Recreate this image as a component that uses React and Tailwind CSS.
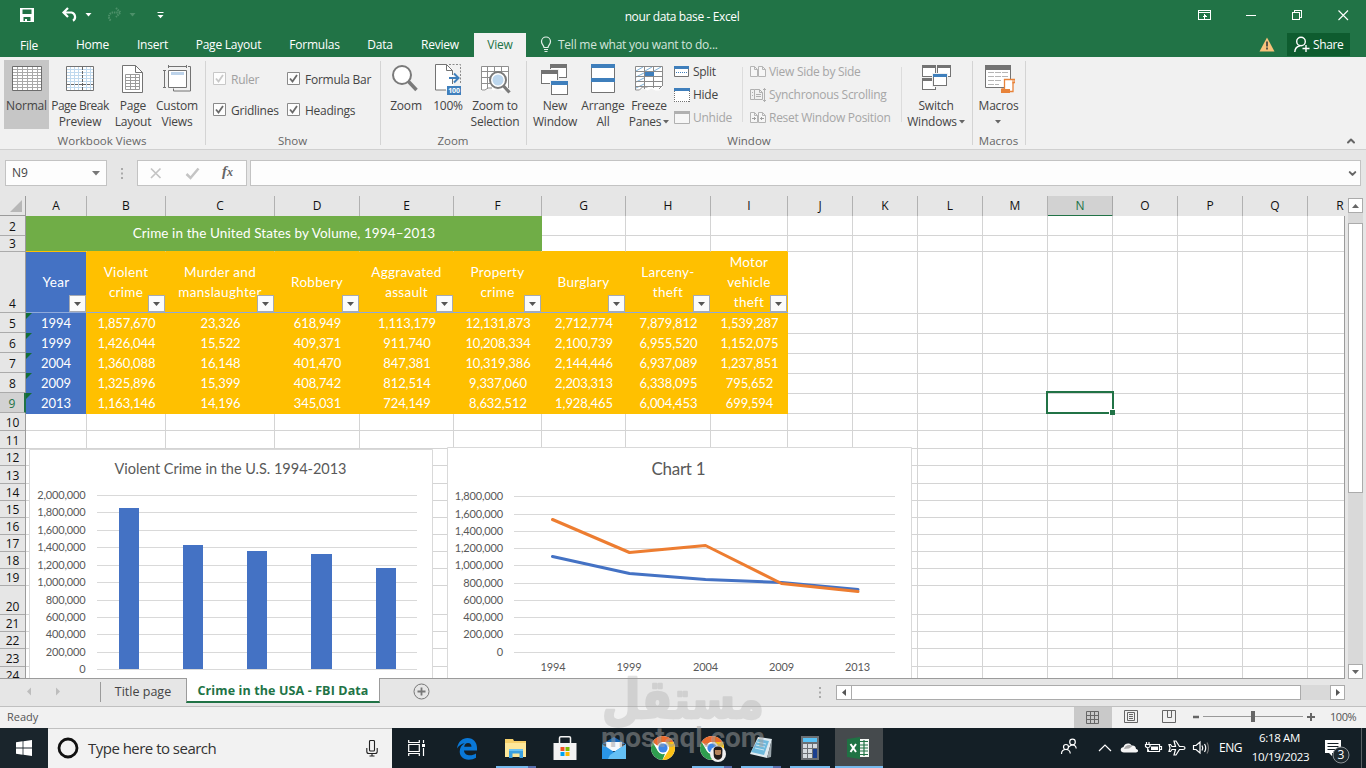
import { ChevronDown, ChevronUp } from 'lucide-react'

const TABS = [
  { label: 'File', cls: 'w-[58px] mr-1 pt-px' },
  { label: 'Home', cls: 'w-[61px]' },
  { label: 'Insert', cls: 'w-[59px]' },
  { label: 'Page Layout', cls: 'w-[93px]' },
  { label: 'Formulas', cls: 'w-[79px]' },
  { label: 'Data', cls: 'w-[52px]' },
  { label: 'Review', cls: 'w-[68px]' },
]

const COLUMNS = ['A', 'B', 'C', 'D', 'E', 'F', 'G', 'H', 'I', 'J', 'K', 'L', 'M', 'N', 'O', 'P', 'Q', 'R']

const GRID_COLS =
  'grid-cols-[61px_79px_109px_85px_94px_88px_84px_85px_77px_65px_65px_65px_65px_65px_65px_65px_65px_65px]'

const ROWS = [
  { n: 2, h: 20 },
  { n: 3, h: 16 },
  { n: 4, h: 61 },
  { n: 5, h: 20 },
  { n: 6, h: 20 },
  { n: 7, h: 20 },
  { n: 8, h: 20 },
  { n: 9, h: 20 },
  { n: 10, h: 18 },
  { n: 11, h: 18 },
  { n: 12, h: 17 },
  { n: 13, h: 18 },
  { n: 14, h: 17 },
  { n: 15, h: 17 },
  { n: 16, h: 17 },
  { n: 17, h: 17 },
  { n: 18, h: 17 },
  { n: 19, h: 17 },
  { n: 20, h: 29 },
  { n: 21, h: 17 },
  { n: 22, h: 17 },
  { n: 23, h: 18 },
  { n: 24, h: 17 },
]

const HEADERS = [
  ['Year'],
  ['Violent', 'crime'],
  ['Murder and', 'manslaughter'],
  ['Robbery'],
  ['Aggravated', 'assault'],
  ['Property', 'crime'],
  ['Burglary'],
  ['Larceny-', 'theft'],
  ['Motor', 'vehicle', 'theft'],
]

const DATA = {
  5: ['1994', '1,857,670', '23,326', '618,949', '1,113,179', '12,131,873', '2,712,774', '7,879,812', '1,539,287'],
  6: ['1999', '1,426,044', '15,522', '409,371', '911,740', '10,208,334', '2,100,739', '6,955,520', '1,152,075'],
  7: ['2004', '1,360,088', '16,148', '401,470', '847,381', '10,319,386', '2,144,446', '6,937,089', '1,237,851'],
  8: ['2009', '1,325,896', '15,399', '408,742', '812,514', '9,337,060', '2,203,313', '6,338,095', '795,652'],
  9: ['2013', '1,163,146', '14,196', '345,031', '724,149', '8,632,512', '1,928,465', '6,004,453', '699,594'],
}

const Caret = ({ className = 'text-[#666]' }) => (
  <svg width="6" height="4" viewBox="0 0 6 4" className={className}>
    <path d="M0 0h6L3 3.5z" fill="currentColor" />
  </svg>
)

/* ---------- title bar and tabs ---------- */

const TitleBar = () => (
  <div className="flex h-[33px] items-start text-white">
    <svg width="170" height="33" viewBox="0 0 170 33" fill="none">
      <path d="M20 8h14v14H20z" fill="#fff" />
      <path d="M22.500 9.500h9v4.500h-9zM23.500 17h7v4h-7z" fill="#217346" />
      <path d="M25 19h2v3h-2z" fill="#fff" />
      <path d="M68 8l-4.500 4.500 4.500 4.500M64 12.500h7.500a4.500 4.500 0 0 1 1.500 8.200" stroke="#fff" strokeWidth="2.200" />
      <path d="M85.500 13h6l-3 3.500z" fill="#fff" />
      <path d="M116 8l4.500 4.500-4.500 4.500M120 12.500h-7.500a4.500 4.500 0 0 0-1.500 8.200" stroke="#4c9069" strokeWidth="2" strokeDasharray="1.500 .8" />
      <path d="M129.500 13h6l-3 3.500z" fill="#4c9069" />
      <path d="M157.500 12.500h6" stroke="#fff" />
      <path d="M157.500 15h6l-3 3.300z" fill="#fff" />
    </svg>
    <div className="flex-1 pl-[4px] pt-[9px] text-center text-[12px] leading-4 tracking-[-0.38px]">nour data base - Excel</div>
    <svg width="176" height="33" viewBox="0 0 176 33" fill="none" stroke="#fff" shapeRendering="crispEdges">
      <path d="M8.500 10.500h12v9h-12zM8.500 12.500h12M14.500 19v-5M12.500 16h4M13.500 15h2" />
      <path d="M56 15.500h10M102.500 12.500h7v7h-7zM104.500 12v-1.500h7v7h-2" />
      <path d="M148.500 10.500l9.500 9.500M158 10.500l-9.500 9.500" shapeRendering="auto" strokeWidth="1.100" />
    </svg>
  </div>
)

const TabStrip = () => (
  <div className="flex h-6 items-stretch text-[12px] leading-6 tracking-[-0.22px] text-white">
    {TABS.map((t) => (
      <div key={t.label} className={`${t.cls} text-center`}>
        {t.label}
      </div>
    ))}
    <div className="w-[52px] bg-[#f1f1f1] text-center text-[#217346]">View</div>
    <svg width="12" height="18" viewBox="0 0 12 18" className="ml-[14px] mt-[3px]" fill="none" stroke="#e5f0ea">
      <path d="M4 11.500c0-2-2.500-3-2.500-6a4.500 4.500 0 0 1 9 0c0 3-2.500 4-2.500 6z" strokeWidth="1.200" />
      <path d="M4 13.500h4M4.500 15.500h3" />
    </svg>
    <div className="ml-[6px] tracking-[-0.25px] text-[#d3e5db]">Tell me what you want to do...</div>
    <div className="flex-1" />
    <svg width="16" height="15" viewBox="0 0 16 15" className="mt-1 mr-3">
      <path d="M8 .5L15.500 14.500H.5z" fill="#f9c27b" />
      <path d="M7 4.500h2v5H7zM7 10.500h2v2H7z" fill="#5b5347" />
    </svg>
    <div className="mr-4 mb-px flex w-[63px] items-center bg-[#0e5c2f] pl-[7px]">
      <svg width="16" height="17" viewBox="0 0 16 17" fill="none" stroke="#fff" strokeWidth="1.400">
        <circle cx="7" cy="5.500" r="4.300" />
        <path d="M.8 16c.2-3.500 2-5.500 5-6M8.500 12.500h7M12 9v7" />
      </svg>
      <span className="ml-[3px] tracking-[-0.4px]">Share</span>
    </div>
  </div>
)

/* ---------- ribbon icons ---------- */

const IconBox = ({ children }) => (
  <svg width="32" height="34" viewBox="0 0 32 34" fill="none" className="shrink-0">
    {children}
  </svg>
)

const NormalIcon = () => (
  <IconBox>
    <path d="M1.500 4.500h29v24h-29z" fill="#fff" stroke="#6d6d6d" />
    <path d="M6.500 5v23M11.500 5v23M16.500 5v23M21.500 5v23M26.500 5v23M2 7.500h28M2 10.500h28M2 13.500h28M2 16.500h28M2 19.500h28M2 22.500h28M2 25.500h28" stroke="#a9a9a9" />
  </IconBox>
)

const PageBreakIcon = () => (
  <IconBox>
    <path d="M2.500 4.500h27v24h-27z" fill="#fff" />
    <path d="M6.500 5v23M10.500 5v23M14.500 5v23M22.500 5v23M26.500 5v23M3 7.500h26M3 10.500h26M3 13.500h26M3 16.500h26M3 19.500h26M3 25.500h26" stroke="#c0d9ee" />
    <path d="M18.500 5v23M3 22.500h26" stroke="#666" strokeDasharray="3 1" />
    <path d="M2.500 4.500h27v24h-27z" stroke="#737373" />
  </IconBox>
)

const PageLayoutIcon = () => (
  <IconBox>
    <path d="M5.500 3.500h13l7 7v20h-20z" fill="#fff" stroke="#737373" />
    <path d="M18.500 3.500v7h7" stroke="#737373" />
    <path d="M8.500 12.500h14v15h-14zM13.500 12v15M18.500 12v15M8 15.500h14M8 18.500h14M8 21.500h14M8 24.500h14" stroke="#9b9b9b" />
  </IconBox>
)

const CustomViewsIcon = () => (
  <IconBox>
    <path d="M7.500 8.500h18v17h-18z" fill="#fff" stroke="#737373" />
    <path d="M10 10h13v3H10z" fill="#bdd3ea" />
    <path d="M7.500 3v3M25.500 3v3M7.500 4.500h18M2 8.500h3M2 25.500h3M3.500 8.500v17M27 4.500h2.500v24.500h-17v-2.500" stroke="#737373" />
  </IconBox>
)

const ZoomIcon = () => (
  <IconBox>
    <circle cx="12" cy="13" r="9" fill="#fff" stroke="#7a7a7a" strokeWidth="2" />
    <path d="M18.500 19.500l8 8.500" stroke="#7a7a7a" strokeWidth="3.500" />
  </IconBox>
)

const HundredIcon = () => (
  <IconBox>
    <path d="M3.500 2.500h12l6 6v19.500h-18z" fill="#fff" />
    <path d="M14 28H3.500V2.500h11l6 6V13M14.500 2.500v6h6M20.500 17v5" stroke="#737373" />
    <path d="M17 2.500h11.500v20" stroke="#8a8a8a" strokeDasharray="2 1.500" />
    <path d="M17 16h9M22 11.500l4.500 4.500-4.500 4.500" stroke="#3f7fbc" strokeWidth="2" />
    <path d="M15 24h14v9H15z" fill="#3f7fbc" />
    <text x="22" y="31.200" fontSize="7" fontWeight="700" textAnchor="middle" fill="#fff">100</text>
  </IconBox>
)

const ZoomSelectionIcon = () => (
  <IconBox>
    <path d="M2.500 4.500h27v21l-3 3h-4l-4-2-4 2-4-2-4 2h-4z" fill="#fff" />
    <path d="M2.500 28V4.500h27V20M8.500 5v22M15.500 5v5M22.500 5v5M2 9.500h27M2 15.500h9M2 21.500h9M3 28h3l3-2h4M29.500 20v6" stroke="#8f8f8f" />
    <circle cx="19" cy="18" r="8" fill="#fff" stroke="#7a7a7a" strokeWidth="2" />
    <circle cx="19" cy="18" r="5.500" fill="#bdd7ee" />
    <path d="M24.500 24l6 6.500" stroke="#7a7a7a" strokeWidth="3.200" />
  </IconBox>
)

const Win = ({ x, y, w, h, color = '#737373', bar = 3 }) => (
  <g>
    <rect x={x - 1} y={y - 1} width={w + 2} height={h + 2} fill="#f1f1f1" />
    <rect x={x + 0.5} y={y + 0.5} width={w - 1} height={h - 1} fill="#fff" stroke="#737373" />
    <rect x={x} y={y} width={w} height={bar} fill={color} />
  </g>
)

const NewWindowIcon = () => (
  <IconBox>
    <Win x={11} y={2} w={17} h={14} bar={4} />
    <Win x={2} y={8} w={17} h={14} bar={4} />
    <Win x={12} y={19} w={17} h={14} bar={4} color="#3f7fbc" />
  </IconBox>
)

const ArrangeIcon = () => (
  <IconBox>
    <path d="M4.500 2.500h23v28h-23z" fill="#fff" stroke="#737373" />
    <path d="M4 2h24v4H4zM4 16h24v4H4z" fill="#3f7fbc" />
  </IconBox>
)

const FreezeIcon = () => (
  <IconBox>
    <path d="M2.500 4.500h27v21l-3 3h-4l-4-2-4 2-4-2-4 2h-4z" fill="#fff" />
    <path d="M3 9l7-4M12 9l7-4M21 9l7-4M3 15l8-4M3 20l8-4M3 26l8-4" stroke="#7fb2d9" />
    <path d="M2.500 28V4.500h27V24M11.500 5v22M20.500 5v21M2 9.500h27M2 14.500h27M2 19.500h27M2 24.500h27M2.500 28h4l3-3h5M29 24l-3 3" stroke="#8a8a8a" />
    <path d="M12 10h9v4h-9z" fill="#3f7fbc" />
  </IconBox>
)

const SwitchIcon = () => (
  <IconBox>
    <Win x={2} y={3} w={14} h={12} />
    <Win x={17} y={3} w={14} h={12} />
    <Win x={2} y={16} w={14} h={12} />
    <Win x={13} y={12} w={14} h={12} color="#3f7fbc" />
  </IconBox>
)

const MacrosIcon = () => (
  <IconBox>
    <path d="M2.500 3.500h25v22h-25z" fill="#fff" stroke="#737373" />
    <path d="M2 3h26v5H2z" fill="#737373" />
    <path d="M5 10.500h6M12 10.500h6M19 10.500h6M5 14.500h6M12 14.500h6M19 14.500h6M5 18.500h6M12 18.500h6M5 22.500h6M12 22.500h4" stroke="#b5b5b5" />
    <path d="M21.500 17.500h10.500v3h-2v9h-11v-2.500h2.500z" fill="#fff" stroke="#e8833a" strokeWidth="1.300" />
    <path d="M18 27h9v4h-9z" fill="#e8833a" />
    <path d="M30 17.500v4" stroke="#e8833a" />
  </IconBox>
)

/* ---------- ribbon ---------- */

const BigButton = ({ icon, lines, width, active, caret }) => (
  <div className={`${width} ${active ? 'bg-[#c6c6c6]' : ''} flex h-[69px] shrink-0 flex-col items-center pt-[2px] text-[12px] leading-4 tracking-[-0.2px] text-[#444]`}>
    {icon}
    <div className="mt-[2px] text-center whitespace-nowrap">
      {lines.map((l, i) => (
        <div key={l} className={`flex items-center justify-center ${l === 'Page Break' ? 'tracking-[-0.5px]' : ''}`}>
          {l}
          {caret && i === lines.length - 1 && l !== 'Macros' && <Caret className="ml-[2px] text-[#666]" />}
        </div>
      ))}
      {lines[0] === 'Macros' && <Caret className="mx-auto mt-[6px] text-[#666]" />}
    </div>
  </div>
)

const Group = ({ label, width, children, labelClass = '' }) => (
  <div className={`${width} relative flex shrink-0 flex-col pt-[3px]`}>
    <div className="flex h-[73px]">{children}</div>
    <div className={`pr-[2px] text-center text-[11.5px] leading-4 text-[#666] ${labelClass}`}>{label}</div>
    <div className="absolute right-0 top-1 h-[84px] w-px bg-[#d4d4d4]" />
  </div>
)

const Check = ({ label, disabled }) => (
  <div className={`flex h-[31px] items-center text-[12px] tracking-[-0.25px] ${disabled ? 'text-[#a0a0a0]' : 'text-[#444]'}`}>
    <svg width="13" height="13" viewBox="0 0 13 13" fill="none" className="mr-[5px] shrink-0">
      <path d="M.5.5h12v12H.5z" fill="#fdfdfd" stroke={disabled ? '#c8c8c8' : '#8a8a8a'} />
      <path d="M3 6.500l2.500 3L10 3" stroke={disabled ? '#c8c8c8' : '#6a6a6a'} strokeWidth="1.800" />
    </svg>
    <span className="pt-[2px]">{label}</span>
  </div>
)

const SmallButton = ({ icon, label, disabled }) => (
  <div className={`flex h-[23px] items-center gap-[3px] text-[12px] tracking-[-0.28px] whitespace-nowrap ${disabled ? 'text-[#a6a6a6]' : 'text-[#444]'}`}>
    <svg width="16" height="16" viewBox="0 0 16 16" fill="none" className="shrink-0">
      {icon}
    </svg>
    {label}
  </div>
)

const twoPages = <path d="M.5 2.500h4l3 3v7h-7zM4.500 2.500v3h3M8.500 2.500h4l3 3v7h-7zM12.500 2.500v3h3" stroke="#b5b5b5" fill="#f6f6f6" />

const Ribbon = () => (
  <div className="flex h-[93px] border-b border-[#d0d0d0] bg-[#f1f1f1]">
    <Group label="Workbook Views" width="w-[206px]">
      <BigButton icon={<NormalIcon />} lines={['Normal']} width="ml-1 w-[45px]" active />
      <BigButton icon={<PageBreakIcon />} lines={['Page Break', 'Preview']} width="w-[62px]" />
      <BigButton icon={<PageLayoutIcon />} lines={['Page', 'Layout']} width="w-[44px]" />
      <BigButton icon={<CustomViewsIcon />} lines={['Custom', 'Views']} width="w-[44px]" />
    </Group>
    <Group label="Show" width="w-[175px]">
      <div className="ml-[7px] mt-[3px] w-[74px]">
        <Check label="Ruler" disabled />
        <Check label="Gridlines" />
      </div>
      <div className="mt-[3px]">
        <Check label="Formula Bar" />
        <Check label="Headings" />
      </div>
    </Group>
    <Group label="Zoom" width="w-[146px]">
      <BigButton icon={<ZoomIcon />} lines={['Zoom']} width="ml-[5px] w-10" />
      <BigButton icon={<HundredIcon />} lines={['100%']} width="w-11" />
      <BigButton icon={<ZoomSelectionIcon />} lines={['Zoom to', 'Selection']} width="w-[50px]" />
    </Group>
    <Group label="Window" width="w-[446px]">
      <BigButton icon={<NewWindowIcon />} lines={['New', 'Window']} width="ml-[3px] w-[50px]" />
      <BigButton icon={<ArrangeIcon />} lines={['Arrange', 'All']} width="w-[46px]" />
      <BigButton icon={<FreezeIcon />} lines={['Freeze', 'Panes']} width="w-[46px]" caret />
      <div className="ml-[2px] w-[68px]">
        <SmallButton
          label="Split"
          icon={
            <>
              <path d="M.5 2.500h14v10H.5z" fill="#fff" stroke="#737373" />
              <path d="M0 2h15v3H0z" fill="#3f7fbc" />
              <path d="M2 8.500h11" stroke="#3f7fbc" strokeDasharray="1 1" />
            </>
          }
        />
        <SmallButton
          label="Hide"
          icon={
            <>
              <path d="M0 1h16v14H0z" fill="#fff" />
              <path d="M.5 4v11M15.500 4v11M0 14.500h16" stroke="#737373" strokeDasharray="1 1" />
              <path d="M0 1h16v3H0z" fill="#3f7fbc" />
            </>
          }
        />
        <SmallButton
          disabled
          label="Unhide"
          icon={
            <>
              <path d="M.5 1.500h15v12H.5z" fill="#f6f6f6" stroke="#b0b0b0" />
              <path d="M0 1h16v3H0z" fill="#b0b0b0" />
            </>
          }
        />
      </div>
      <div className="mt-[7px] h-[55px] w-px bg-[#dcdcdc]" />
      <div className="ml-[7px] w-[151px]">
        <SmallButton disabled label="View Side by Side" icon={twoPages} />
        <SmallButton
          disabled
          label="Synchronous Scrolling"
          icon={
            <path d="M4.500 2.500h-4v10h4M4.500 2.500h5l3 3v7h-8zM9.500 2.500v3h3M6 7.500h5M6 9.500h5M2 5.500h1M2 8.500h1M14.500 1v14M13 2.500h3M13 13.500h3" stroke="#b0b0b0" />
          }
        />
        <SmallButton
          disabled
          label="Reset Window Position"
          icon={
            <>
              {twoPages}
              <path d="M2 8.500h4M4.500 7v3M10 8.500h4M11.500 7v3" stroke="#a0a0a0" />
            </>
          }
        />
      </div>
      <div className="mt-[7px] h-[55px] w-px bg-[#dcdcdc]" />
      <BigButton icon={<SwitchIcon />} lines={['Switch', 'Windows']} width="ml-[2px] w-[64px]" caret />
    </Group>
    <Group label="Macros" width="w-[53px]">
      <BigButton icon={<MacrosIcon />} lines={['Macros']} width="w-[51px]" caret />
    </Group>
    <div className="flex flex-1 items-end justify-end pr-[9px] pb-[2px]">
      <ChevronUp className="h-3 w-3 text-[#666]" strokeWidth={4} />
    </div>
  </div>
)

/* ---------- formula bar ---------- */

const Dots = () => (
  <svg width="2" height="11" viewBox="0 0 2 11" className="text-[#aaa]" fill="currentColor">
    <path d="M0 0h2v2H0zM0 4.500h2v2H0zM0 9h2v2H0z" />
  </svg>
)

const FormulaBar = () => (
  <div className="flex h-[46px] items-start bg-[#e6e6e6] pt-[10px]">
    <div className="ml-[5px] flex h-[26px] w-[102px] items-center justify-between border border-[#c3c3c3] bg-[#fdfdfd] pr-[6px] pl-[6px] text-[12px] text-[#444]">
      N9
      <svg width="8" height="5" viewBox="0 0 8 5">
        <path d="M0 0h8L4 4.500z" fill="#777" />
      </svg>
    </div>
    <div className="mt-2 ml-[14px]">
      <Dots />
    </div>
    <div className="ml-[14px] flex h-[26px] w-[110px] items-center border border-[#c3c3c3] bg-[#fdfdfd]">
      <svg width="60" height="24" viewBox="0 0 60 24" className="ml-[10px]" fill="none" stroke="#c4c4c4">
        <path d="M3 7.500l9.500 9.500M12.500 7.500L3 17" strokeWidth="1.700" />
        <path d="M38.500 13l4 4L50.500 7.500" strokeWidth="2.500" />
      </svg>
      <span className="ml-[14px] pb-[3px] font-['Liberation_Serif',serif] text-[15px] font-bold italic leading-5 text-[#666]">
        f<span className="text-[12px]">x</span>
      </span>
    </div>
    <div className="ml-[3px] flex h-[26px] w-[1111px] items-center justify-end border border-[#c3c3c3] bg-[#fdfdfd] pr-[2px]">
      <ChevronDown className="h-[11px] w-[11px] text-[#666]" strokeWidth={4.500} />
    </div>
  </div>
)

/* ---------- sheet ---------- */

const FilterButton = ({ className }) => (
  <div className={`absolute bottom-0 flex h-[17px] w-[17px] items-center justify-center border border-[#a6aab2] bg-[#fbfbfb] ${className}`}>
    <svg width="7" height="4" viewBox="0 0 7 4">
      <path d="M0 0h7L3.500 4z" fill="#555" />
    </svg>
  </div>
)

const Cell = ({ row, col }) => {
  if (row === 4 && col < 9) {
    return (
      <div
        className={`relative flex flex-col items-center justify-center border-b-2 border-b-[#8ea9db] text-center ${
          col === 0 ? 'border-r border-r-[#ffc000] bg-[#4472c4]' : 'bg-[#ffc000] pr-px'
        }`}
      >
        {HEADERS[col].map((l) => (
          <div key={l} className="text-[13.5px] leading-5 tracking-[0.28px]">
            {l}
          </div>
        ))}
        <FilterButton className={col === 0 ? 'right-0' : 'right-px'} />
      </div>
    )
  }
  if (DATA[row] && col < 9) {
    return (
      <div
        className={`relative text-center leading-[21px] tracking-[-0.1px] ${
          col === 0 ? 'border-r border-[#ffc000] bg-[#4472c4]' : 'bg-[#ffc000]'
        }`}
      >
        {DATA[row][col]}
        {col === 0 && (
          <svg width="6" height="6" viewBox="0 0 6 6" className="absolute top-0 left-0">
            <path d="M0 0h6L0 6z" fill="#146c36" />
          </svg>
        )}
      </div>
    )
  }
  return <div className={`border-r border-b border-[#d4d4d4] ${row === 3 && col < 9 ? 'border-b-[#ffc000]' : ''}`} />
}

const chartText = "font-['Lato',sans-serif]"

const BarChart = () => {
  const bars = [
    [90, 59, 20],
    [154, 96, 20],
    [218, 102, 20],
    [282, 105, 21],
    [347, 119, 20],
  ]
  const lines = [46, 63, 81, 98, 116, 133, 151, 168, 185, 203, 220]
  return (
    <svg width="404" height="230" viewBox="0 0 404 230" className={`absolute top-[233px] left-[3px] ${chartText}`}>
      <path d="M.5 230V.5h403V230" fill="#fff" stroke="#d9d9d9" />
      <text x="201.500" y="25" fontSize="14.500" textAnchor="middle" textLength="232" fill="#595959">Violent Crime in the U.S. 1994-2013</text>
      {lines.map((y, i) => {
        const value = (2000000 - i * 200000).toLocaleString('en-US')
        return (
          <g key={y}>
            <path d={`M68 ${y + 0.5}h320`} stroke="#d9d9d9" />
            <text x="56.500" y={y + 3.5} fontSize="11" letterSpacing="-0.15" textAnchor="end" fill="#595959">{value}</text>
          </g>
        )
      })}
      {bars.map(([x, y, w]) => (
        <rect key={x} x={x} y={y} width={w} height={220 - y} fill="#4472c4" />
      ))}
    </svg>
  )
}

const LineChart = () => {
  const lines = [49, 67, 84, 101, 118, 136, 153, 170, 187, 205]
  const years = [['1994', 106], ['1999', 182], ['2004', 258.5], ['2009', 334.5], ['2013', 410.5]]
  return (
    <svg width="465" height="231" viewBox="0 0 465 231" className={`absolute top-[231px] left-[421px] ${chartText}`}>
      <path d="M.5 232V.5h464V232" fill="#fff" stroke="#d9d9d9" />
      <text x="231.500" y="27.500" fontSize="17" textAnchor="middle" textLength="54" fill="#595959">Chart 1</text>
      {lines.map((y, i) => {
        const value = (1800000 - i * 200000).toLocaleString('en-US')
        return (
          <g key={y}>
            <path d={`M67 ${y + 0.5}h381`} stroke="#d9d9d9" />
            <text x="56" y={y + 3.5} fontSize="11" letterSpacing="-0.15" textAnchor="end" fill="#595959">{value}</text>
          </g>
        )
      })}
      <path d="M105.500 109.500L182.500 126.500L258.500 132.500L334.500 135.500L411 142.500" fill="none" stroke="#4472c4" strokeWidth="3" strokeLinecap="round" strokeLinejoin="round" />
      <path d="M105.500 72.500L182.500 105.500L258.500 98.500L334.500 136.500L411 144.500" fill="none" stroke="#ed7d31" strokeWidth="3" strokeLinecap="round" strokeLinejoin="round" />
      {years.map(([label, x]) => (
        <text key={label} x={x} y="223.500" fontSize="11" letterSpacing="-0.15" textAnchor="middle" fill="#595959">{label}</text>
      ))}
    </svg>
  )
}

const Sheet = () => (
  <div className="flex h-[483px] bg-[#e6e6e6]">
    <div className="flex w-[1345px] flex-col overflow-hidden border-b border-[#9b9b9b]">
      <div className="flex h-5 shrink-0">
        <div className="flex w-[26px] shrink-0 items-end justify-end border-r border-b border-[#9b9b9b] pr-[3px] pb-[3px]">
          <svg width="12" height="12" viewBox="0 0 12 12">
            <path d="M12 0v12H0z" fill="#b7b7b7" />
          </svg>
        </div>
        <div className={`grid ${GRID_COLS} overflow-hidden text-center text-[12px] leading-[19px] text-[#111]`}>
          {COLUMNS.map((c) => (
            <div
              key={c}
              className={
                c === 'N'
                  ? 'border-r border-b-2 border-r-[#a8a8a8] border-b-[#217346] bg-[#d2d2d2] text-[#217346]'
                  : 'border-r border-b border-r-[#b1b1b1] border-b-[#9b9b9b]'
              }
            >
              {c}
            </div>
          ))}
        </div>
      </div>
      <div className="flex min-h-0 flex-1">
        <div className="w-[26px] shrink-0 border-r border-[#9b9b9b] text-center text-[12px] leading-4 text-[#111]">
          {ROWS.map((r) => (
            <div
              key={r.n}
              className={`flex items-end justify-center border-b border-[#ababab] ${
                r.n === 9 ? '-mr-px border-r-2 border-r-[#217346] bg-[#d2d2d2] text-[#217346]' : ''
              }`}
              style={{ height: r.h }}
            >
              <span className={r.h === 20 || r.h === 61 ? '' : '-mb-px'}>{r.n}</span>
            </div>
          ))}
        </div>
        <div className="relative w-[1319px] overflow-hidden border-r border-[#9b9b9b] bg-white font-['Lato',sans-serif] text-[13px] text-white">
          {ROWS.map((r) => (
            <div key={r.n} className={`grid ${GRID_COLS}`} style={{ height: r.h }}>
              {COLUMNS.map((c, i) => (
                <Cell key={c} row={r.n} col={i} />
              ))}
            </div>
          ))}
          {/* merged title cell over A2:F3 */}
          <div className="absolute top-0 left-0 h-[35px] w-[516px] bg-[#70ad47] text-center text-[13.5px] leading-[35px] tracking-[0.1px]">
            Crime in the United States by Volume, 1994–2013
          </div>
          <div className="absolute top-[175px] left-[1020px] h-[23px] w-[68px] border-2 border-[#217346]" />
          <div className="absolute top-[193px] left-[1083px] h-[6px] w-[6px] border-t border-l border-white bg-[#217346]" />
          <BarChart />
          <LineChart />
        </div>
      </div>
    </div>
    <div className="ml-[3px] mt-[2px] flex w-[15px] flex-col bg-[#d9d9d9]">
      <div className="flex h-[15px] items-center justify-center border border-[#ababab] bg-white">
        <svg width="7" height="4" viewBox="0 0 7 4"><path d="M0 4h7L3.500 0z" fill="#666" /></svg>
      </div>
      <div className="mt-[10px] h-[270px] border border-[#ababab] bg-white" />
      <div className="flex-1" />
      <div className="flex h-[15px] items-center justify-center border border-[#ababab] bg-white">
        <svg width="7" height="4" viewBox="0 0 7 4"><path d="M0 0h7L3.500 4z" fill="#666" /></svg>
      </div>
    </div>
  </div>
)

const SheetTabs = () => (
  <div className="flex h-7 items-start border-b border-[#c0c0c0] bg-[#e6e6e6] text-[12.5px] leading-[25px]">
    <svg width="101" height="26" viewBox="0 0 101 26">
      <path d="M31 8.500v8L27 12.500zM56 8.500v8l4-4z" fill="#bdbdbd" />
      <path d="M100.500 3v20" stroke="#9b9b9b" />
    </svg>
    <div className="w-[85px] pr-px text-center text-[#444]">Title page</div>
    <div className="-mt-px h-[25px] w-[194px] border-r border-b-2 border-l border-r-[#9b9b9b] border-b-[#217346] border-l-[#9b9b9b] bg-white text-center leading-[26px] font-bold tracking-[0.12px] text-[#217346]">
      Crime in the USA - FBI Data
    </div>
    <svg width="17" height="17" viewBox="0 0 17 17" className="mt-1 ml-[33px]" fill="none" stroke="#777">
      <circle cx="8.500" cy="8.500" r="7.500" />
      <path d="M4.500 8.500h8M8.500 4.500v8" strokeWidth="1.800" />
    </svg>
    <div className="mt-[8px] ml-[389px]">
      <Dots />
    </div>
    <div className="mt-[6px] ml-[15px] flex h-[15px] w-[509px] bg-[#d9d9d9]">
      <div className="flex w-4 items-center justify-center border border-[#ababab] bg-white">
        <svg width="4" height="7" viewBox="0 0 4 7"><path d="M4 0v7L0 3.500z" fill="#555" /></svg>
      </div>
      <div className="-ml-px w-[450px] border border-[#ababab] bg-white" />
      <div className="flex-1" />
      <div className="flex w-[15px] items-center justify-center border border-[#ababab] bg-white">
        <svg width="4" height="7" viewBox="0 0 4 7"><path d="M0 0v7l4-3.500z" fill="#555" /></svg>
      </div>
    </div>
  </div>
)

const StatusBar = () => (
  <div className="flex h-[21px] items-stretch bg-[#f1f1f1] text-[11px] leading-[20px] text-[#555]">
    <div className="ml-[7px] flex-1">Ready</div>
    <div className="flex w-[38px] items-center justify-center bg-[#c9c9c9]">
      <svg width="13" height="13" viewBox="0 0 13 13" fill="none" stroke="#666" className="-mt-px -ml-px">
        <path d="M.5.5h12v12H.5zM4.500 0v13M8.500 0v13M0 4.500h13M0 8.500h13" />
      </svg>
    </div>
    <svg width="64" height="13" viewBox="0 0 64 13" fill="none" stroke="#666" className="mt-[3px]">
      <path d="M12.500.5h13v12h-13zM15.500 2.500h7v8h-7zM17 4.500h4M17 6.500h4M17 8.500h4" />
      <path d="M50.500.5h13v12h-13zM55.500 0v7.500h4M59.500 0v7.500" />
    </svg>
    <svg width="128" height="21" viewBox="0 0 128 21" fill="none" stroke="#666" className="ml-[14px]">
      <path d="M3 10h6" strokeWidth="2.500" />
      <path d="M13 9.500h100" stroke="#999" />
      <path d="M61 4h4v11h-4z" fill="#666" stroke="none" />
      <path d="M117 10h8M121 6v8" strokeWidth="2" />
    </svg>
    <div className="mr-[8px] ml-[12px] w-[28px] tracking-[-0.45px]">100%</div>
  </div>
)

/* ---------- taskbar ---------- */

const Chrome = () => (
  <>
    <circle cx="12" cy="12" r="12" fill="#fff" />
    <path d="M12 0a12 12 0 0 1 10.400 6H12a6 6 0 0 0-5.600 3.800L1.600 6A12 12 0 0 1 12 0z" fill="#ea6b2d" />
    <path d="M1.600 6l5.200 9a6 6 0 0 0 7.200 2.700L11.500 24A12 12 0 0 1 1.600 6z" fill="#2f9e4f" />
    <path d="M22.400 6A12 12 0 0 1 11.500 24l5.700-9a6 6 0 0 0-2-8.500L15 6z" fill="#fbc116" />
    <circle cx="12" cy="12" r="5.800" fill="#fff" />
    <circle cx="12" cy="12" r="4.600" fill="#3d86e8" />
  </>
)

const APPS = [
  {
    name: 'edge',
    art: (
      <path d="M2 12.500C3 5.500 7.500 2 12.500 2 18.500 2 22 6.500 22 12v2.500H9c.3 3.300 3 4.800 6 4.800 2.300 0 4.300-.6 6-1.800v4.300c-2 1.300-4.500 1.900-7.300 1.900C8 23.700 4.700 20 4.700 15.500c0-3.600 2-6.600 5-8.200C6.500 7.800 3.800 9.500 2 12.500zM9.200 10.700h7.300c0-2.200-1.200-3.700-3.500-3.700-2.200 0-3.500 1.500-3.800 3.700z" fill="#0a78d7" />
    ),
  },
  {
    name: 'explorer',
    bar: 'split',
    art: (
      <>
        <path d="M1 3h8l1 2h12v16H1z" fill="#f6d06a" />
        <path d="M1 7h21v14H1z" fill="#fde79a" />
        <path d="M5 13h14v9h-3.500v-4.500h-7V22H5z" fill="#3aa0e0" />
        <path d="M5 13h14v2H5z" fill="#6cc3f2" />
      </>
    ),
  },
  {
    name: 'store',
    art: (
      <>
        <path d="M6.500 7V2q0-1.300 1.300-1.300h8.400Q17.500.7 17.500 2v5" fill="none" stroke="#f3f3f3" strokeWidth="1.500" />
        <path d="M.5 7h23v17H.5z" fill="#f3f3f3" />
        <path d="M7.500 11h4v4h-4z" fill="#f25022" />
        <path d="M12.500 11h4v4h-4z" fill="#7fba00" />
        <path d="M7.500 16h4v4h-4z" fill="#00a4ef" />
        <path d="M12.500 16h4v4h-4z" fill="#ffb900" />
      </>
    ),
  },
  {
    name: 'mail',
    art: (
      <>
        <path d="M0 8l12-7 12 7z" fill="#1467b8" />
        <path d="M4 6h16v9H4z" fill="#f5f9fd" />
        <path d="M0 8l12 8 12-8v15H0z" fill="#2a95e6" />
        <path d="M24 8L8 19l-2 4h18z" fill="#64c0f5" />
      </>
    ),
  },
  { name: 'chrome', art: <Chrome /> },
  {
    name: 'chrome-profile',
    bar: 'split',
    art: (
      <>
        <Chrome />
        <circle cx="18" cy="18" r="8" fill="#f0f0f0" />
        <path d="M13.500 14c0-5 9-5 9 0l-.3 6c-1 5-7.400 5-8.400 0z" fill="#241d1a" />
        <path d="M15 14h6v4l-1.500 1h-3L15 18z" fill="#b5835a" />
      </>
    ),
  },
  {
    name: 'notes',
    bar: 'split',
    art: (
      <>
        <path d="M9 1l14 2-5 19-17-4z" fill="#dfe9ef" />
        <path d="M9 3l11 2-5 14-13-3z" fill="#6fb9dc" />
        <path d="M8 6l9 2M7 9l9 2M6 12l9 2" stroke="#c8e6f4" />
        <path d="M23 3l-1 18-4 1z" fill="#9aa5ab" />
      </>
    ),
  },
  {
    name: 'calculator',
    bar: 'full',
    art: (
      <>
        <path d="M3 0h18v24H3z" fill="#6b6f73" />
        <path d="M5 2h14v4H5z" fill="#59c2f5" />
        <path d="M5 8h4v4H5zM10 8h4v4h-4zM15 8h4v4h-4zM5 13h4v4H5zM10 13h4v4h-4zM5 18h4v4H5zM10 18h4v4h-4z" fill="#d5dade" />
        <path d="M15 13h4v9h-4z" fill="#1b3f8f" />
      </>
    ),
  },
  {
    name: 'excel',
    bar: 'active',
    art: (
      <>
        <path d="M12 3h10v18H12z" fill="#f4f8f5" />
        <path d="M13 5.500h8M13 9h8M13 12h8M13 15h8M13 18.500h8M17 4v16" stroke="#217346" strokeWidth="1.200" />
        <path d="M0 3l13-2v22L0 21z" fill="#1f7244" />
        <path d="M3.500 8l5.500 8M9 8l-5.500 8" stroke="#fff" strokeWidth="2" />
      </>
    ),
  },
]

const AppSlot = ({ app }) => (
  <div className={`relative mr-px flex h-10 w-12 items-center justify-center ${app.bar === 'active' ? 'bg-[#454a4d]' : ''}`}>
    <svg width="24" height="24" viewBox="0 0 24 24" fill="none" className="overflow-visible">
      {app.art}
    </svg>
    {app.bar === 'active' && <div className="absolute bottom-0 left-0 h-[2px] w-12 bg-[#76b9ed]" />}
    {app.bar === 'full' && <div className="absolute bottom-0 left-1 h-[2px] w-10 bg-[#76b9ed]" />}
    {app.bar === 'split' && (
      <div className="absolute bottom-0 left-1 flex h-[2px] w-10 bg-[#5870ae]">
        <div className="w-8 bg-[#76b9ed]" />
      </div>
    )}
  </div>
)

const Taskbar = () => (
  <div className="flex h-10 bg-[#141f26] text-white">
    <div className="flex w-12 items-center justify-center bg-[#1a252c]">
      <svg width="16" height="16" viewBox="0 0 16 16" fill="#fff">
        <path d="M0 2.200L6.600 1.300v6.300H0zM7.400 1.200L16 0v7.600H7.400zM0 8.400h6.600v6.300L0 13.800zM7.400 8.400H16V16l-8.600-1.200z" />
      </svg>
    </div>
    <div className="flex w-[344px] items-center border-t border-[#c0c0c0] bg-[#f2f2f2] text-[#333]">
      <svg width="22" height="22" viewBox="0 0 22 22" fill="none" className="-mt-px ml-[9px]">
        <circle cx="11" cy="11" r="9" stroke="#111" strokeWidth="2.800" />
      </svg>
      <span className="ml-[9px] flex-1 pb-[2px] text-[15px] leading-5 tracking-[-0.52px]">Type here to search</span>
      <svg width="12" height="17" viewBox="0 0 12 17" fill="none" stroke="#222" strokeWidth="1.100" className="mr-[14px] mb-px">
        <path d="M3.500 1.500q0-1 1-1h3q1 0 1 1v8.500q0 1-1 1h-3q-1 0-1-1zM.8 8v3.500q0 2 2 2h6.400q2 0 2-2V8M6 13.500v3M3.500 16h5" />
      </svg>
    </div>
    <div className="mr-[3px] flex w-12 items-center justify-center">
      <svg width="17" height="16" viewBox="0 0 17 16" fill="none" stroke="#fff" strokeWidth="1.200">
        <path d="M.7 0v2.500h10.600V0M.7 16v-2.500h10.600V16M.7 4.500h10.600v7H.7zM15.500 0v3M15.500 8v8" />
        <path d="M14 4h3v3h-3z" fill="#fff" stroke="none" />
      </svg>
    </div>
    {APPS.map((a) => (
      <AppSlot key={a.name} app={a} />
    ))}
    <div className="flex-1" />
    <svg width="164" height="40" viewBox="0 0 164 40" fill="none" stroke="#fff" strokeWidth="1.200">
      {/* people */}
      <circle cx="14.500" cy="14" r="2.800" />
      <circle cx="8" cy="19" r="2.500" />
      <path d="M3.500 26c0-3 2-4.500 4.500-4.500s4 1.500 4.300 4M11 19c1-1.500 2-2 3.500-2 2.300 0 3.500 1.500 3.700 3.500" />
      <path d="M41 23l6-6 6 6" />
      {/* onedrive */}
      <path d="M66 24.500c-4 0-4.500-5-.5-5.500 1-4 6.500-4.500 8-1.500 3-.5 4.500 1.500 4.500 3.500 3 .5 2.500 3.500 0 3.500z" fill="#f5f5f5" stroke="none" />
      <path d="M66 21c1-4 6-5.500 8-2.500l-3 2z" fill="#aaa" stroke="none" />
      {/* battery with plug */}
      <path d="M91 16.500h10.500v7h-11v-2M102 18.500h1.500v3H102" />
      <path d="M93 18.500h7v3.500h-7z" fill="#fff" stroke="none" />
      <path d="M88.500 14v2M91 14v2M87.500 16.500h4.500v2q-2 2.500-4.500 0zM89.700 20v4" />
      {/* airplane mode */}
      <path d="M127 20c0-1-1-1.500-2-1.500h-3.500L118 13h-2l1.500 5.500H114l-1.500-2H111l1 3.500-1 3.500h1.500l1.500-2h3.500L116 27h2l3.500-5.500h3.500c1 0 2-.5 2-1.500z" />
      {/* volume */}
      <path d="M135.500 17.500h2.500l4-3.500v11l-4-3.500h-2.500zM144 17.500q1.500 2.500 0 5M146.500 16q2.500 4 0 8" />
      <path d="M149 14.500q3 5.500 0 11" stroke="#777" />
    </svg>
    <div className="ml-[-3px] w-[24px] text-[12px] leading-10 tracking-[-0.45px]">ENG</div>
    <div className="ml-[1px] w-[73px] pt-[2px] text-center text-[11.5px] leading-[18px] tracking-[-0.35px] whitespace-nowrap">
      <div className="-mt-px mb-px pr-[2px]">6:18 AM</div>
      <div>10/19/2023</div>
    </div>
    <svg width="49" height="40" viewBox="0 0 49 40" fill="none">
      <path d="M8 12h16v13h-9v3l-3-3H8z" fill="#fff" />
      <path d="M10.500 15.500h11M10.500 18.500h11M10.500 21.500h8" stroke="#141f26" />
      <circle cx="24" cy="27" r="8" fill="#1e292f" stroke="#8c9296" />
      <text x="24" y="31.200" fontSize="12" textAnchor="middle" fill="#fff">3</text>
      <path d="M44.500 0v40" stroke="#5a6165" />
    </svg>
  </div>
)

const Watermark = () => (
  <svg
    width="166"
    height="80"
    viewBox="0 0 166 80"
    className="pointer-events-none absolute top-[676px] left-[600px] overflow-visible"
    fill="#a0a0a0"
  >
    <text
      x="83"
      y="42"
      fontSize="54"
      fontWeight="700"
      textAnchor="middle"
      textLength="162"
      lengthAdjust="spacingAndGlyphs"
      stroke="#a0a0a0"
      strokeWidth="2.500"
      strokeLinejoin="round"
      opacity="0.3"
      className="font-['DejaVu_Sans',sans-serif]"
    >
      مستقل
    </text>
    <text x="83" y="71" fontSize="28" fontWeight="700" textAnchor="middle" textLength="164" opacity="0.5" className="font-['Roboto',sans-serif]">mostaql.com</text>
  </svg>
)

const App = () => (
  <div className="relative flex h-[768px] w-[1366px] flex-col overflow-hidden bg-[#217346] font-['Open_Sans','Noto_Sans',sans-serif]">
    <TitleBar />
    <TabStrip />
    <Ribbon />
    <FormulaBar />
    <Sheet />
    <SheetTabs />
    <StatusBar />
    <Taskbar />
    <Watermark />
  </div>
)

export default App
